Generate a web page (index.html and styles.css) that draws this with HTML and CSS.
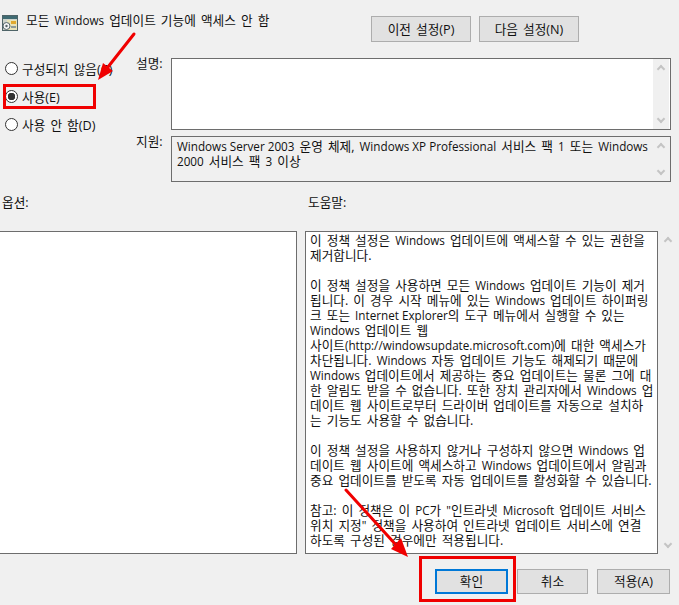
FILE: index.html
```html
<!DOCTYPE html>
<html lang="ko">
<head>
    <meta charset="UTF-8">
    <title>모든 Windows 업데이트 기능에 액세스 안 함</title>
    <link rel="stylesheet" href="styles.css">
</head>
<body>
    <div class="dialog">
        <!-- Title and previous / next buttons -->
        <div class="header">
            <svg class="policy-icon" width="16" height="16" viewBox="0 0 16 16">
                <rect x="0.5" y="0.5" width="15" height="15" fill="#cfd4cc" stroke="#4f6468"/>
                <rect x="1" y="1" width="14" height="3" fill="#3f6a72"/>
                <rect x="5" y="5" width="10" height="10" fill="#e8e4b8"/>
                <rect x="9" y="6" width="5" height="3" fill="#e0a92e"/>
                <rect x="9" y="11" width="5" height="2" fill="#8c9a9a"/>
                <circle cx="4.5" cy="11" r="3.5" fill="#f4f4f4" stroke="#56666a"/>
                <circle cx="4.5" cy="11" r="1.2" fill="#56666a"/>
            </svg>
            <div class="title">모든 <span class="latin">Windows</span> 업데이트 기능에 액세스 안 함</div>
            <div class="nav-buttons">
                <button class="btn nav-btn">이전 설정(P)</button>
                <button class="btn nav-btn">다음 설정(N)</button>
            </div>
        </div>

        <!-- Radio group and description boxes -->
        <div class="settings">
            <div class="radios">
                <label class="radio"><span class="dot"></span>구성되지 않음(C)</label>
                <label class="radio"><span class="dot checked"></span>사용(E)</label>
                <label class="radio"><span class="dot"></span>사용 안 함(D)</label>
            </div>
            <div class="info">
                <div class="info-row">
                    <div class="info-label">설명:</div>
                    <div class="box box-desc">
                        <div class="box-text"></div>
                        <div class="scrollbar"><span class="up"></span><span class="down"></span></div>
                    </div>
                </div>
                <div class="info-row">
                    <div class="info-label">지원:</div>
                    <div class="box box-support">
                        <div class="box-text"><span class="latin">Windows Server 2003</span> 운영 체제, <span class="latin">Windows XP Professional</span> 서비스 팩 <span class="latin">1</span> 또는 <span class="latin">Windows</span><br><span class="latin">2000</span> 서비스 팩 <span class="latin">3</span> 이상</div>
                        <div class="scrollbar"><span class="up"></span><span class="down"></span></div>
                    </div>
                </div>
            </div>
        </div>

        <!-- Options and help panes -->
        <div class="pane-labels">
            <div class="options-label">옵션:</div>
            <div class="help-label">도움말:</div>
        </div>
        <div class="panes">
            <div class="options-pane"></div>
            <div class="help-pane">
                <div class="help-text">
                    <p>이 정책 설정은 <span class="latin">Windows</span> 업데이트에 액세스할 수 있는 권한을<br>제거합니다.</p>
                    <p>이 정책 설정을 사용하면 모든 <span class="latin">Windows</span> 업데이트 기능이 제거<br>됩니다. 이 경우 시작 메뉴에 있는 <span class="latin">Windows</span> 업데이트 하이퍼링<br>크 또는 <span class="latin">Internet Explorer</span>의 도구 메뉴에서 실행할 수 있는<br><span class="latin">Windows</span> 업데이트 웹<br>사이트<span class="latin">(http://windowsupdate.microsoft.com)</span>에 대한 액세스가<br>차단됩니다. <span class="latin">Windows</span> 자동 업데이트 기능도 해제되기 때문에<br><span class="latin">Windows</span> 업데이트에서 제공하는 중요 업데이트는 물론 그에 대<br>한 알림도 받을 수 없습니다. 또한 장치 관리자에서 <span class="latin">Windows</span> 업<br>데이트 웹 사이트로부터 드라이버 업데이트를 자동으로 설치하<br>는 기능도 사용할 수 없습니다.</p>
                    <p>이 정책 설정을 사용하지 않거나 구성하지 않으면 <span class="latin">Windows</span> 업<br>데이트 웹 사이트에 액세스하고 <span class="latin">Windows</span> 업데이트에서 알림과<br>중요 업데이트를 받도록 자동 업데이트를 활성화할 수 있습니다.</p>
                    <p>참고: 이 정책은 이 <span class="latin">PC</span>가 <span class="latin">"</span>인트라넷 <span class="latin">Microsoft</span> 업데이트 서비스<br>위치 지정<span class="latin">"</span> 정책을 사용하여 인트라넷 업데이트 서비스에 연결<br>하도록 구성된 경우에만 적용됩니다.</p>
                </div>
                <div class="scrollbar help-scroll"><span class="up"></span><span class="down"></span></div>
            </div>
        </div>

        <!-- Bottom buttons -->
        <div class="footer">
            <button class="btn ok-btn">확인</button>
            <button class="btn cancel-btn">취소</button>
            <button class="btn">적용(A)</button>
        </div>

        <!-- Red annotations drawn over the screenshot -->
        <div class="mark mark-radio"></div>
        <div class="mark mark-ok"></div>
        <svg class="arrows" width="679" height="605" viewBox="0 0 679 605">
            <path d="M134 34 L108 67" stroke="#f00000" stroke-width="3" fill="none" stroke-linecap="round"/>
            <polygon points="98,80 103,63 113,71" fill="#f00000"/>
            <path d="M346 490 L397 546" stroke="#f00000" stroke-width="3" fill="none" stroke-linecap="round"/>
            <polygon points="408,557 391,549 401,538" fill="#f00000"/>
        </svg>
    </div>
</body>
</html>
```

FILE: styles.css
```css
* {
    box-sizing: border-box;
}
html, body {
    margin: 0;
    padding: 0;
}
body {
    font-family: "Open Sans", "Noto Sans CJK KR", sans-serif;
    font-size: 12.67px;
    word-spacing: 1.8px;
    color: #111;
    background-color: #f0f0f0;
}
.latin {
    font-size: 11.7px;
    word-spacing: 0;
}
.dialog {
    position: relative;
    width: 679px;
    height: 605px;
    overflow: hidden;
    padding-top: 16px;
    background-color: #f0f0f0;
}
.header {
    display: flex;
    align-items: flex-start;
    height: 42px;
    padding-left: 2px;
}
.policy-icon {
    flex: none;
    margin-top: -1px;
}
.title {
    width: 345px;
    margin-left: 8px;
    line-height: 8px;
    white-space: nowrap;
}
.nav-buttons {
    display: flex;
    gap: 8px;
}
.btn {
    width: 73px;
    height: 25px;
    padding: 0 0 2px;
    font: inherit;
    word-spacing: inherit;
    color: #111;
    background-color: #e1e1e1;
    border: 1px solid #adadad;
}
.nav-btn {
    width: 100px;
    height: 26px;
}
.settings {
    display: flex;
    height: 124px;
}
.radios {
    width: 136px;
    display: flex;
    flex-direction: column;
    gap: 13px;
    padding-top: 3px;
}
.radio {
    display: flex;
    align-items: center;
    gap: 4px;
    height: 15px;
    padding-left: 5px;
    white-space: nowrap;
}
.dot {
    display: block;
    width: 13px;
    height: 13px;
    border: 1px solid #333;
    border-radius: 50%;
    background-color: #fff;
}
.dot.checked {
    background: radial-gradient(circle, #333 0 3.5px, #fff 4px);
}
.info {
    flex: 1;
}
.info-row {
    display: flex;
    margin-bottom: 6px;
}
.info-label {
    width: 35px;
    line-height: 10px;
}
.box {
    display: flex;
    width: 500px;
    border: 1px solid #6d6d6d;
}
.box-desc {
    height: 72px;
    background-color: #fff;
}
.box-support {
    height: 46px;
}
.box-text {
    flex: 1;
    padding: 2px 5px;
    line-height: 15px;
    white-space: nowrap;
}
.scrollbar {
    position: relative;
    width: 16px;
    margin-right: 1px;
    background-color: #f0f0f0;
}
.up, .down {
    position: absolute;
    left: 5px;
    width: 6px;
    height: 6px;
    border-left: 2px solid #c4c4c4;
    border-top: 2px solid #c4c4c4;
}
.up {
    top: 7px;
    transform: rotate(45deg);
}
.down {
    bottom: 7px;
    transform: rotate(225deg);
}
.pane-labels {
    display: flex;
    height: 49px;
    padding-top: 13px;
    padding-left: 2px;
    line-height: 14px;
}
.options-label {
    width: 306px;
    flex: none;
}
.panes {
    display: flex;
    height: 323px;
}
.options-pane {
    width: 299px;
    margin-left: -2px;
    background-color: #fff;
    border: 1px solid #6d6d6d;
}
.help-pane {
    display: flex;
    margin-left: 8px;
    width: 372px;
}
.help-text {
    width: 353px;
    padding: 1px 0 0 4px;
    background-color: #fff;
    border: 1px solid #6d6d6d;
    line-height: 15px;
    white-space: nowrap;
}
.help-text p {
    margin: 0 0 15px;
}
.help-scroll {
    margin-left: 2px;
}
.footer {
    display: flex;
    justify-content: flex-end;
    gap: 9px;
    padding: 15px 9px 0 0;
}
.ok-btn {
    border: 2px solid #0078d7;
}
.cancel-btn {
    width: 71px;
}
.mark {
    position: absolute;
    border: 3px solid #f00000;
}
.mark-radio {
    left: 3px;
    top: 84px;
    width: 93px;
    height: 25px;
}
.mark-ok {
    left: 419px;
    top: 556px;
    width: 97px;
    height: 46px;
}
.arrows {
    position: absolute;
    left: 0;
    top: 0;
}
```
